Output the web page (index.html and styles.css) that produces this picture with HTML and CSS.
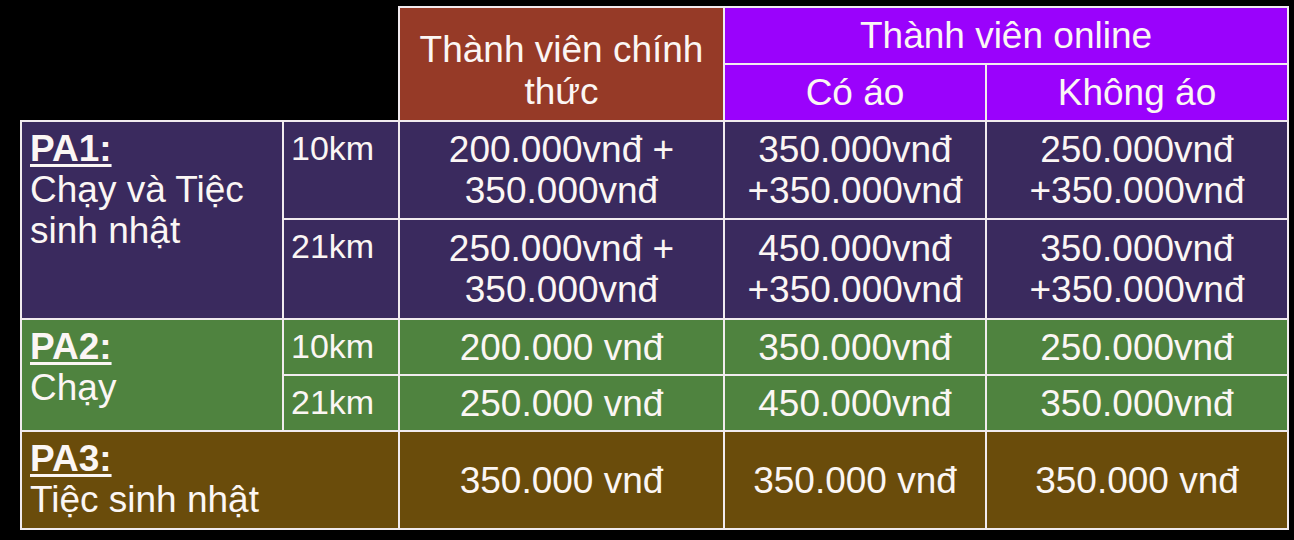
FILE: index.html
```html
<!DOCTYPE html>
<html lang="vi">
<head>
<meta charset="utf-8">
<title>Bảng giá</title>
<link rel="stylesheet" href="styles.css">
</head>
<body>
<table class="price">
  <colgroup>
    <col class="c-label">
    <col class="c-km">
    <col class="c-official">
    <col class="c-shirt">
    <col class="c-noshirt">
  </colgroup>
  <tr class="row-h1">
    <td class="blank" colspan="2" rowspan="2"></td>
    <th class="official" rowspan="2">Thành viên chính<br>thức</th>
    <th class="online" colspan="2">Thành viên online</th>
  </tr>
  <tr class="row-h2">
    <th class="online">Có áo</th>
    <th class="online">Không áo</th>
  </tr>
  <tr class="row-a1 pa1">
    <td class="label" rowspan="2"><span class="pa">PA1:</span><br>Chạy và Tiệc<br>sinh nhật</td>
    <td class="km">10km</td>
    <td class="val">200.000vnđ +<br>350.000vnđ</td>
    <td class="val">350.000vnđ<br>+350.000vnđ</td>
    <td class="val">250.000vnđ<br>+350.000vnđ</td>
  </tr>
  <tr class="row-a2 pa1">
    <td class="km">21km</td>
    <td class="val">250.000vnđ +<br>350.000vnđ</td>
    <td class="val">450.000vnđ<br>+350.000vnđ</td>
    <td class="val">350.000vnđ<br>+350.000vnđ</td>
  </tr>
  <tr class="row-b pa2">
    <td class="label" rowspan="2"><span class="pa">PA2:</span><br>Chạy</td>
    <td class="km">10km</td>
    <td class="val">200.000 vnđ</td>
    <td class="val">350.000vnđ</td>
    <td class="val">250.000vnđ</td>
  </tr>
  <tr class="row-b pa2">
    <td class="km">21km</td>
    <td class="val">250.000 vnđ</td>
    <td class="val">450.000vnđ</td>
    <td class="val">350.000vnđ</td>
  </tr>
  <tr class="row-c pa3">
    <td class="label" colspan="2"><span class="pa">PA3:</span><br>Tiệc sinh nhật</td>
    <td class="val">350.000 vnđ</td>
    <td class="val">350.000 vnđ</td>
    <td class="val">350.000 vnđ</td>
  </tr>
</table>
</body>
</html>
```
FILE: styles.css
```css
html, body {
  margin: 0;
  padding: 0;
  background: #000;
}

body {
  font-family: "Liberation Sans", Arial, sans-serif;
  color: #fbf6f4;
}

.price {
  border-collapse: collapse;
  table-layout: fixed;
  width: 1268px;
  margin: 6px 0 0 20px;
}

.c-label { width: 262px; }
.c-km { width: 116px; }
.c-official { width: 325px; }
.c-shirt { width: 262px; }
.c-noshirt { width: 302px; }

.price th,
.price td {
  border: 2px solid #f1ebef;
  padding: 0;
  line-height: 41px;
  font-weight: normal;
  text-align: center;
  vertical-align: middle;
}

.price td.blank {
  border: none;
  background: #000;
}

.row-h1 { height: 57px; }
.row-h2 { height: 57px; }
.row-a1 { height: 98px; }
.row-a2 { height: 100px; }
.row-b { height: 56px; }
.row-c { height: 98px; }

.price th {
  font-size: 37px;
}

.price th.official {
  background: #963a27;
  padding-top: 14px;
  line-height: 42px;
}

.price th.online {
  background: #9a02fc;
}

.pa1 td { background: #3a2a5e; }
.pa2 td { background: #4f833f; }
.pa3 td { background: #6a4c0b; }

.price td.label {
  text-align: left;
  vertical-align: top;
  font-size: 37px;
  padding: 6px 0 0 8px;
}

.pa {
  font-weight: bold;
  text-decoration: underline;
  text-decoration-thickness: 3px;
  text-underline-offset: 3px;
}

.price td.km {
  text-align: left;
  vertical-align: top;
  font-size: 34px;
  padding: 6px 0 0 7px;
}

.price td.val {
  font-size: 37px;
}
```
